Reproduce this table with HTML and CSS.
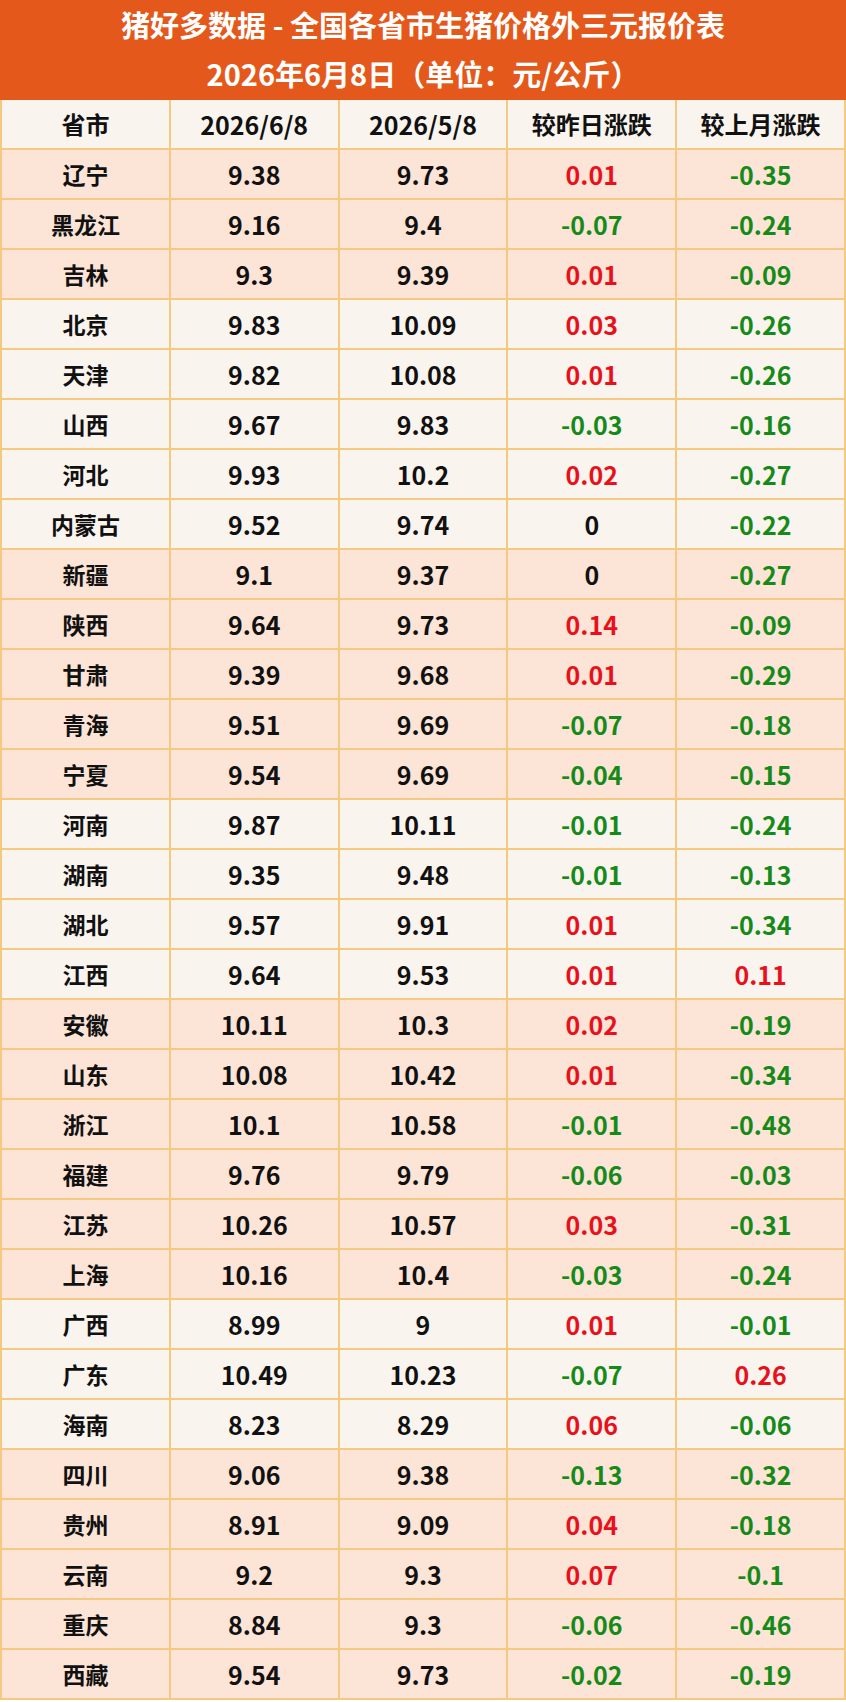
FILE: index.html
```html
<!DOCTYPE html>
<html lang="zh-CN">
<head>
<meta charset="utf-8">
<title>猪好多数据 - 全国各省市生猪价格外三元报价表</title>
<link rel="stylesheet" href="styles.css">
</head>
<body>
<div class="sheet">
  <header class="title">
    <div class="title-line">猪好多数据 - 全国各省市生猪价格外三元报价表</div>
    <div class="title-line">2026年6月8日（单位：元/公斤）</div>
  </header>
  <div class="grid">
    <div class="cell head">省市</div><div class="cell head num">2026/6/8</div><div class="cell head num">2026/5/8</div><div class="cell head">较昨日涨跌</div><div class="cell head">较上月涨跌</div>

    <div class="cell pink">辽宁</div><div class="cell pink num">9.38</div><div class="cell pink num">9.73</div><div class="cell pink num up">0.01</div><div class="cell pink num down">-0.35</div>
    <div class="cell pink">黑龙江</div><div class="cell pink num">9.16</div><div class="cell pink num">9.4</div><div class="cell pink num down">-0.07</div><div class="cell pink num down">-0.24</div>
    <div class="cell pink">吉林</div><div class="cell pink num">9.3</div><div class="cell pink num">9.39</div><div class="cell pink num up">0.01</div><div class="cell pink num down">-0.09</div>

    <div class="cell cream">北京</div><div class="cell cream num">9.83</div><div class="cell cream num">10.09</div><div class="cell cream num up">0.03</div><div class="cell cream num down">-0.26</div>
    <div class="cell cream">天津</div><div class="cell cream num">9.82</div><div class="cell cream num">10.08</div><div class="cell cream num up">0.01</div><div class="cell cream num down">-0.26</div>
    <div class="cell cream">山西</div><div class="cell cream num">9.67</div><div class="cell cream num">9.83</div><div class="cell cream num down">-0.03</div><div class="cell cream num down">-0.16</div>
    <div class="cell cream">河北</div><div class="cell cream num">9.93</div><div class="cell cream num">10.2</div><div class="cell cream num up">0.02</div><div class="cell cream num down">-0.27</div>
    <div class="cell cream">内蒙古</div><div class="cell cream num">9.52</div><div class="cell cream num">9.74</div><div class="cell cream num">0</div><div class="cell cream num down">-0.22</div>

    <div class="cell pink">新疆</div><div class="cell pink num">9.1</div><div class="cell pink num">9.37</div><div class="cell pink num">0</div><div class="cell pink num down">-0.27</div>
    <div class="cell pink">陕西</div><div class="cell pink num">9.64</div><div class="cell pink num">9.73</div><div class="cell pink num up">0.14</div><div class="cell pink num down">-0.09</div>
    <div class="cell pink">甘肃</div><div class="cell pink num">9.39</div><div class="cell pink num">9.68</div><div class="cell pink num up">0.01</div><div class="cell pink num down">-0.29</div>
    <div class="cell pink">青海</div><div class="cell pink num">9.51</div><div class="cell pink num">9.69</div><div class="cell pink num down">-0.07</div><div class="cell pink num down">-0.18</div>
    <div class="cell pink">宁夏</div><div class="cell pink num">9.54</div><div class="cell pink num">9.69</div><div class="cell pink num down">-0.04</div><div class="cell pink num down">-0.15</div>

    <div class="cell cream">河南</div><div class="cell cream num">9.87</div><div class="cell cream num">10.11</div><div class="cell cream num down">-0.01</div><div class="cell cream num down">-0.24</div>
    <div class="cell cream">湖南</div><div class="cell cream num">9.35</div><div class="cell cream num">9.48</div><div class="cell cream num down">-0.01</div><div class="cell cream num down">-0.13</div>
    <div class="cell cream">湖北</div><div class="cell cream num">9.57</div><div class="cell cream num">9.91</div><div class="cell cream num up">0.01</div><div class="cell cream num down">-0.34</div>
    <div class="cell cream">江西</div><div class="cell cream num">9.64</div><div class="cell cream num">9.53</div><div class="cell cream num up">0.01</div><div class="cell cream num up">0.11</div>

    <div class="cell pink">安徽</div><div class="cell pink num">10.11</div><div class="cell pink num">10.3</div><div class="cell pink num up">0.02</div><div class="cell pink num down">-0.19</div>
    <div class="cell pink">山东</div><div class="cell pink num">10.08</div><div class="cell pink num">10.42</div><div class="cell pink num up">0.01</div><div class="cell pink num down">-0.34</div>
    <div class="cell pink">浙江</div><div class="cell pink num">10.1</div><div class="cell pink num">10.58</div><div class="cell pink num down">-0.01</div><div class="cell pink num down">-0.48</div>
    <div class="cell pink">福建</div><div class="cell pink num">9.76</div><div class="cell pink num">9.79</div><div class="cell pink num down">-0.06</div><div class="cell pink num down">-0.03</div>
    <div class="cell pink">江苏</div><div class="cell pink num">10.26</div><div class="cell pink num">10.57</div><div class="cell pink num up">0.03</div><div class="cell pink num down">-0.31</div>
    <div class="cell pink">上海</div><div class="cell pink num">10.16</div><div class="cell pink num">10.4</div><div class="cell pink num down">-0.03</div><div class="cell pink num down">-0.24</div>

    <div class="cell cream">广西</div><div class="cell cream num">8.99</div><div class="cell cream num">9</div><div class="cell cream num up">0.01</div><div class="cell cream num down">-0.01</div>
    <div class="cell cream">广东</div><div class="cell cream num">10.49</div><div class="cell cream num">10.23</div><div class="cell cream num down">-0.07</div><div class="cell cream num up">0.26</div>
    <div class="cell cream">海南</div><div class="cell cream num">8.23</div><div class="cell cream num">8.29</div><div class="cell cream num up">0.06</div><div class="cell cream num down">-0.06</div>

    <div class="cell pink">四川</div><div class="cell pink num">9.06</div><div class="cell pink num">9.38</div><div class="cell pink num down">-0.13</div><div class="cell pink num down">-0.32</div>
    <div class="cell pink">贵州</div><div class="cell pink num">8.91</div><div class="cell pink num">9.09</div><div class="cell pink num up">0.04</div><div class="cell pink num down">-0.18</div>
    <div class="cell pink">云南</div><div class="cell pink num">9.2</div><div class="cell pink num">9.3</div><div class="cell pink num up">0.07</div><div class="cell pink num down">-0.1</div>
    <div class="cell pink">重庆</div><div class="cell pink num">8.84</div><div class="cell pink num">9.3</div><div class="cell pink num down">-0.06</div><div class="cell pink num down">-0.46</div>
    <div class="cell pink">西藏</div><div class="cell pink num">9.54</div><div class="cell pink num">9.73</div><div class="cell pink num down">-0.02</div><div class="cell pink num down">-0.19</div>
  </div>
</div>
</body>
</html>
```

FILE: styles.css
```css
* { box-sizing: border-box; }
html, body { margin: 0; padding: 0; background: #ffffff; }
body {
  font-family: "Noto Sans CJK SC", "Noto Sans", sans-serif;
  font-weight: 700;
  color: #111111;
}
.sheet { width: 846px; }
.title {
  height: 100px;
  background: #e4591b;
  color: #ffffff;
  display: flex;
  flex-direction: column;
  align-items: center;
  justify-content: center;
  padding-bottom: 2px;
}
.title-line {
  font-size: 29px;
  line-height: 49px;
}
.grid {
  display: grid;
  grid-template-columns: repeat(5, 1fr);
  grid-auto-rows: 48px;
  gap: 2px;
  padding: 0 2px 2px 2px;
  background: #f6c983;
}
.cell {
  display: flex;
  align-items: center;
  justify-content: center;
  font-size: 23px;
  line-height: 1;
}
.num { font-size: 25px; }
.head { background: #faf4ef; font-size: 24px; }
.head.num { font-size: 25px; }
.pink { background: #fce4d6; }
.cream { background: #faf4ef; }
.up { color: #e8111b; }
.down { color: #168a18; }
```
